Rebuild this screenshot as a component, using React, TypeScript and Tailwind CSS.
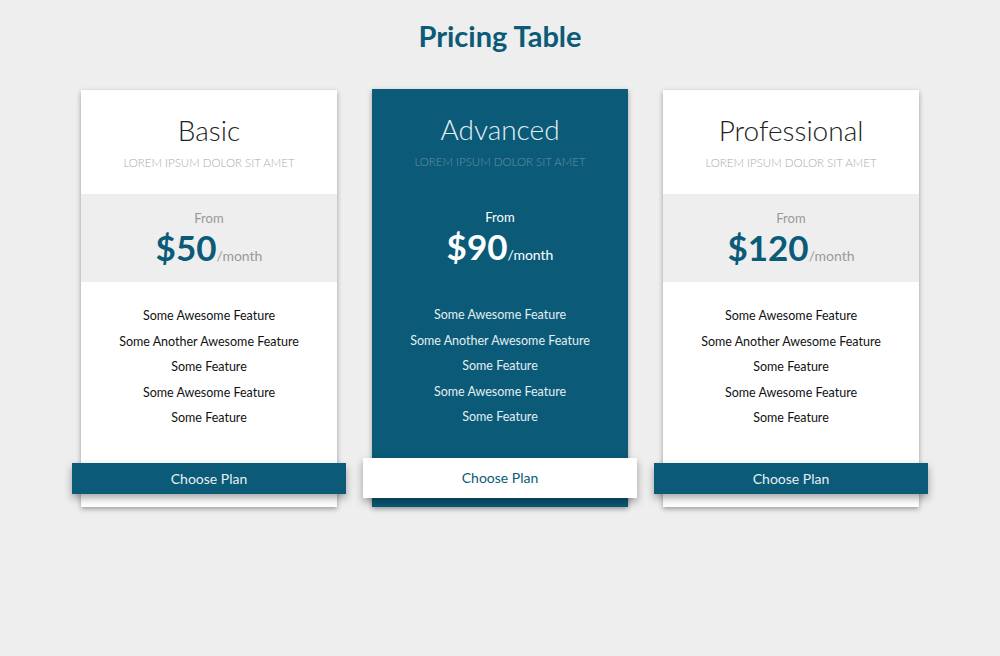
import type React from "react";

type Plan = {
  name: string;
  price: string;
  featured?: boolean;
};

const plans: Plan[] = [
  { name: "Basic", price: "$50" },
  { name: "Advanced", price: "$90", featured: true },
  { name: "Professional", price: "$120" },
];

const features = [
  "Some Awesome Feature",
  "Some Another Awesome Feature",
  "Some Feature",
  "Some Awesome Feature",
  "Some Feature",
];

const PlanCard: React.FC<{ plan: Plan }> = ({ plan }) => {
  const f = plan.featured;
  return (
    <div
      className={`w-[256px] flex flex-col shadow-[0_2px_5px_rgba(0,0,0,0.35)] ${
        f ? "bg-[#0a5a78] -mt-px text-white" : "bg-white text-[#222]"
      }`}
    >
      <div className="h-[104px] pt-[22px] text-center">
        <h2
          className={`text-[28px] leading-[36px] font-light ${
            f ? "text-[#e4eef2]" : "text-[#222]"
          }`}
        >
          {plan.name}
        </h2>
        <p
          className={`mt-[6px] text-[11.5px] font-light uppercase ${
            f ? "text-[#6a92a6]" : "text-[#aaa]"
          }`}
        >
          Lorem ipsum dolor sit amet
        </p>
      </div>
      <div
        className={`h-[88px] pt-[16px] text-center ${f ? "" : "bg-[#eeeeee]"}`}
      >
        <div
          className={`text-[13px] leading-[16px] ${f ? "text-white" : "text-[#999]"}`}
        >
          From
        </div>
        <div className="mt-[1px] leading-[40px]">
          <span
            className={`text-[35px] font-bold ${f ? "text-white" : "text-[#0a5a78]"}`}
          >
            {plan.price}
          </span>
          <span className={`text-[14px] ${f ? "text-white" : "text-[#999]"}`}>
            /month
          </span>
        </div>
      </div>
      <ul className="pt-[21px] text-center text-[12.5px] leading-[25.5px]">
        {features.map((feat, i) => (
          <li key={i} className={f ? "text-[#e4eef2]" : "text-[#111]"}>
            {feat}
          </li>
        ))}
      </ul>
      <div className={`-mx-[9px] ${f ? "mt-[28px] mb-[9px]" : "mt-[32px] mb-[13px]"}`}>
        <button
          className={`w-full text-[14px] shadow-[0_4px_8px_rgba(0,0,0,0.35)] ${
            f
              ? "h-[40px] bg-white text-[#0a5a78]"
              : "h-[31px] bg-[#0a5a78] text-[#e8f0f3]"
          }`}
        >
          Choose Plan
        </button>
      </div>
    </div>
  );
};

export default function App() {
  return (
    <div className="min-h-[656px] bg-[#eeeeee] font-['Lato','Open_Sans',sans-serif]">
      <h1 className="pt-[17px] text-center text-[29px] leading-[38px] font-bold text-[#0a5a78]">
        Pricing Table
      </h1>
      <div className="mt-[35px] flex justify-center items-start gap-[35px]">
        {plans.map((p) => (
          <PlanCard key={p.name} plan={p} />
        ))}
      </div>
    </div>
  );
}
